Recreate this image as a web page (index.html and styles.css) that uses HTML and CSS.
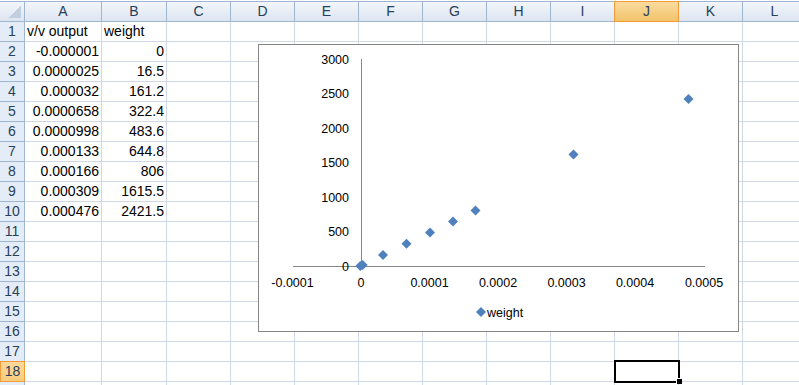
FILE: index.html
```html
<!DOCTYPE html>
<html>
<head>
    <meta charset="utf-8" />
    <title>Book1 - weight</title>
    <link rel="stylesheet" href="styles.css">
</head>
<body>
    <div class="sheet">
        <div class="corner"></div><div class="ch">A</div><div class="ch">B</div><div class="ch">C</div><div class="ch">D</div><div class="ch">E</div><div class="ch">F</div><div class="ch">G</div><div class="ch">H</div><div class="ch">I</div><div class="ch sel">J</div><div class="ch">K</div><div class="ch">L</div>
        <div class="rh">1</div><div class="c">v/v output</div><div class="c">weight</div><div class="c"></div><div class="c"></div><div class="c"></div><div class="c"></div><div class="c"></div><div class="c"></div><div class="c"></div><div class="c"></div><div class="c"></div><div class="c"></div>
        <div class="rh">2</div><div class="c n">-0.000001</div><div class="c n">0</div><div class="c"></div><div class="c"></div><div class="c"></div><div class="c"></div><div class="c"></div><div class="c"></div><div class="c"></div><div class="c"></div><div class="c"></div><div class="c"></div>
        <div class="rh">3</div><div class="c n">0.0000025</div><div class="c n">16.5</div><div class="c"></div><div class="c"></div><div class="c"></div><div class="c"></div><div class="c"></div><div class="c"></div><div class="c"></div><div class="c"></div><div class="c"></div><div class="c"></div>
        <div class="rh">4</div><div class="c n">0.000032</div><div class="c n">161.2</div><div class="c"></div><div class="c"></div><div class="c"></div><div class="c"></div><div class="c"></div><div class="c"></div><div class="c"></div><div class="c"></div><div class="c"></div><div class="c"></div>
        <div class="rh">5</div><div class="c n">0.0000658</div><div class="c n">322.4</div><div class="c"></div><div class="c"></div><div class="c"></div><div class="c"></div><div class="c"></div><div class="c"></div><div class="c"></div><div class="c"></div><div class="c"></div><div class="c"></div>
        <div class="rh">6</div><div class="c n">0.0000998</div><div class="c n">483.6</div><div class="c"></div><div class="c"></div><div class="c"></div><div class="c"></div><div class="c"></div><div class="c"></div><div class="c"></div><div class="c"></div><div class="c"></div><div class="c"></div>
        <div class="rh">7</div><div class="c n">0.000133</div><div class="c n">644.8</div><div class="c"></div><div class="c"></div><div class="c"></div><div class="c"></div><div class="c"></div><div class="c"></div><div class="c"></div><div class="c"></div><div class="c"></div><div class="c"></div>
        <div class="rh">8</div><div class="c n">0.000166</div><div class="c n">806</div><div class="c"></div><div class="c"></div><div class="c"></div><div class="c"></div><div class="c"></div><div class="c"></div><div class="c"></div><div class="c"></div><div class="c"></div><div class="c"></div>
        <div class="rh">9</div><div class="c n">0.000309</div><div class="c n">1615.5</div><div class="c"></div><div class="c"></div><div class="c"></div><div class="c"></div><div class="c"></div><div class="c"></div><div class="c"></div><div class="c"></div><div class="c"></div><div class="c"></div>
        <div class="rh">10</div><div class="c n">0.000476</div><div class="c n">2421.5</div><div class="c"></div><div class="c"></div><div class="c"></div><div class="c"></div><div class="c"></div><div class="c"></div><div class="c"></div><div class="c"></div><div class="c"></div><div class="c"></div>
        <div class="rh">11</div><div class="c"></div><div class="c"></div><div class="c"></div><div class="c"></div><div class="c"></div><div class="c"></div><div class="c"></div><div class="c"></div><div class="c"></div><div class="c"></div><div class="c"></div><div class="c"></div>
        <div class="rh">12</div><div class="c"></div><div class="c"></div><div class="c"></div><div class="c"></div><div class="c"></div><div class="c"></div><div class="c"></div><div class="c"></div><div class="c"></div><div class="c"></div><div class="c"></div><div class="c"></div>
        <div class="rh">13</div><div class="c"></div><div class="c"></div><div class="c"></div><div class="c"></div><div class="c"></div><div class="c"></div><div class="c"></div><div class="c"></div><div class="c"></div><div class="c"></div><div class="c"></div><div class="c"></div>
        <div class="rh">14</div><div class="c"></div><div class="c"></div><div class="c"></div><div class="c"></div><div class="c"></div><div class="c"></div><div class="c"></div><div class="c"></div><div class="c"></div><div class="c"></div><div class="c"></div><div class="c"></div>
        <div class="rh">15</div><div class="c"></div><div class="c"></div><div class="c"></div><div class="c"></div><div class="c"></div><div class="c"></div><div class="c"></div><div class="c"></div><div class="c"></div><div class="c"></div><div class="c"></div><div class="c"></div>
        <div class="rh">16</div><div class="c"></div><div class="c"></div><div class="c"></div><div class="c"></div><div class="c"></div><div class="c"></div><div class="c"></div><div class="c"></div><div class="c"></div><div class="c"></div><div class="c"></div><div class="c"></div>
        <div class="rh">17</div><div class="c"></div><div class="c"></div><div class="c"></div><div class="c"></div><div class="c"></div><div class="c"></div><div class="c"></div><div class="c"></div><div class="c"></div><div class="c"></div><div class="c"></div><div class="c"></div>
        <div class="rh sel">18</div><div class="c"></div><div class="c"></div><div class="c"></div><div class="c"></div><div class="c"></div><div class="c"></div><div class="c"></div><div class="c"></div><div class="c"></div><div class="c active"></div><div class="c"></div><div class="c"></div>
        <div class="rh"></div><div class="c"></div><div class="c"></div><div class="c"></div><div class="c"></div><div class="c"></div><div class="c"></div><div class="c"></div><div class="c"></div><div class="c"></div><div class="c"></div><div class="c"></div><div class="c"></div>

        <!-- embedded scatter chart, floats over the cells -->
        <div class="chart">
            <svg width="481" height="288" viewBox="0 0 481 288">
                <defs>
                    <path id="dot" d="M0,-5 L5,0 L0,5 L-5,0 Z" fill="#4F81BD" />
                </defs>
                <line class="axis" x1="103.5" y1="15" x2="103.5" y2="222" />
                <line class="axis" x1="35" y1="222.5" x2="447" y2="222.5" />

                <g class="ylab">
                    <text x="91" y="19.5">3000</text>
                    <text x="91" y="54">2500</text>
                    <text x="91" y="88.5">2000</text>
                    <text x="91" y="123">1500</text>
                    <text x="91" y="157.5">1000</text>
                    <text x="91" y="192">500</text>
                    <text x="91" y="226.5">0</text>
                </g>
                <g class="xlab">
                    <text x="34.5" y="243">-0.0001</text>
                    <text x="103" y="243">0</text>
                    <text x="171.5" y="243">0.0001</text>
                    <text x="240" y="243">0.0002</text>
                    <text x="308.5" y="243">0.0003</text>
                    <text x="377" y="243">0.0004</text>
                    <text x="446" y="243">0.0005</text>
                </g>

                <use href="#dot" x="102.3" y="222" />
                <use href="#dot" x="104.7" y="220.9" />
                <use href="#dot" x="125" y="210.9" />
                <use href="#dot" x="148.5" y="199.8" />
                <use href="#dot" x="172" y="188.6" />
                <use href="#dot" x="195" y="177.5" />
                <use href="#dot" x="217.5" y="166.4" />
                <use href="#dot" x="315.5" y="110.5" />
                <use href="#dot" x="430.5" y="55" />

                <use href="#dot" x="223" y="268" />
                <text class="legend" x="229" y="273">weight</text>
            </svg>
        </div>
    </div>
</body>
</html>
```

FILE: styles.css
```css
body {
    margin: 0;
    background-color: #FFF;
    overflow: hidden;
    font-family: "Liberation Sans", Arial, sans-serif;
}

div.sheet {
    position: relative;
    display: grid;
    grid-template-columns: 25px 77px 65px repeat(10, 64px);
    grid-template-rows: 22px repeat(19, 20px);
    font-size: 14px;
    color: #000;
}

div.corner,
div.ch {
    margin-top: 1px;
    border-top: 1px solid #9DB4D2;
    border-right: 1px solid #9EB6CE;
    border-bottom: 1px solid #9EB6CE;
    background: linear-gradient(#F3F6FB, #DDE5F1);
    box-sizing: border-box;
}

div.corner {
    background:
        linear-gradient(135deg, transparent 50%, #C0CEE0 50%) right 3px bottom 3px / 12px 12px no-repeat,
        linear-gradient(#F3F6FB, #DDE5F1);
}

div.ch {
    color: #27415A;
    text-align: center;
    line-height: 19px;
}

div.ch.sel {
    background: linear-gradient(#F9DBA0, #F2C36A);
    border: 1px solid #F29B3A;
    margin-left: -1px;
}

div.rh {
    color: #27415A;
    text-align: center;
    line-height: 19px;
    background-color: #E4ECF7;
    border-right: 1px solid #9EB6CE;
    border-bottom: 1px solid #9EB6CE;
    box-sizing: border-box;
}

div.rh.sel {
    background: linear-gradient(#FCD99A, #F8CC7D);
    border: 1px solid #F29B3A;
    margin-top: -1px;
}

div.c {
    border-right: 1px solid #D0D7E5;
    border-bottom: 1px solid #D0D7E5;
    box-sizing: border-box;
    padding: 0 2px 0 2px;
    line-height: 19px;
    white-space: nowrap;
    overflow: hidden;
}

div.c.n {
    text-align: right;
}

div.c.active {
    position: relative;
    overflow: visible;
    outline: 2px solid #000;
    outline-offset: -1px;
    margin-top: -1px;
}

div.c.active:after {
    content: '';
    position: absolute;
    right: -4px;
    bottom: -3px;
    width: 5px;
    height: 5px;
    background-color: #000;
    border: 1px solid #FFF;
    border-width: 1px 0 0 1px;
}

div.chart {
    position: absolute;
    left: 258px;
    top: 44px;
    width: 481px;
    height: 288px;
    border: 1px solid #868686;
    box-sizing: border-box;
    background-color: #FFF;
}

div.chart svg {
    display: block;
    margin: -1px 0 0 -1px;
}

line.axis {
    stroke: #868686;
    stroke-width: 1;
}

g.ylab text {
    text-anchor: end;
    font-size: 12.5px;
    fill: #000;
}

g.xlab text {
    text-anchor: middle;
    font-size: 12.5px;
    fill: #000;
}

text.legend {
    font-size: 12.5px;
    fill: #000;
}
```
